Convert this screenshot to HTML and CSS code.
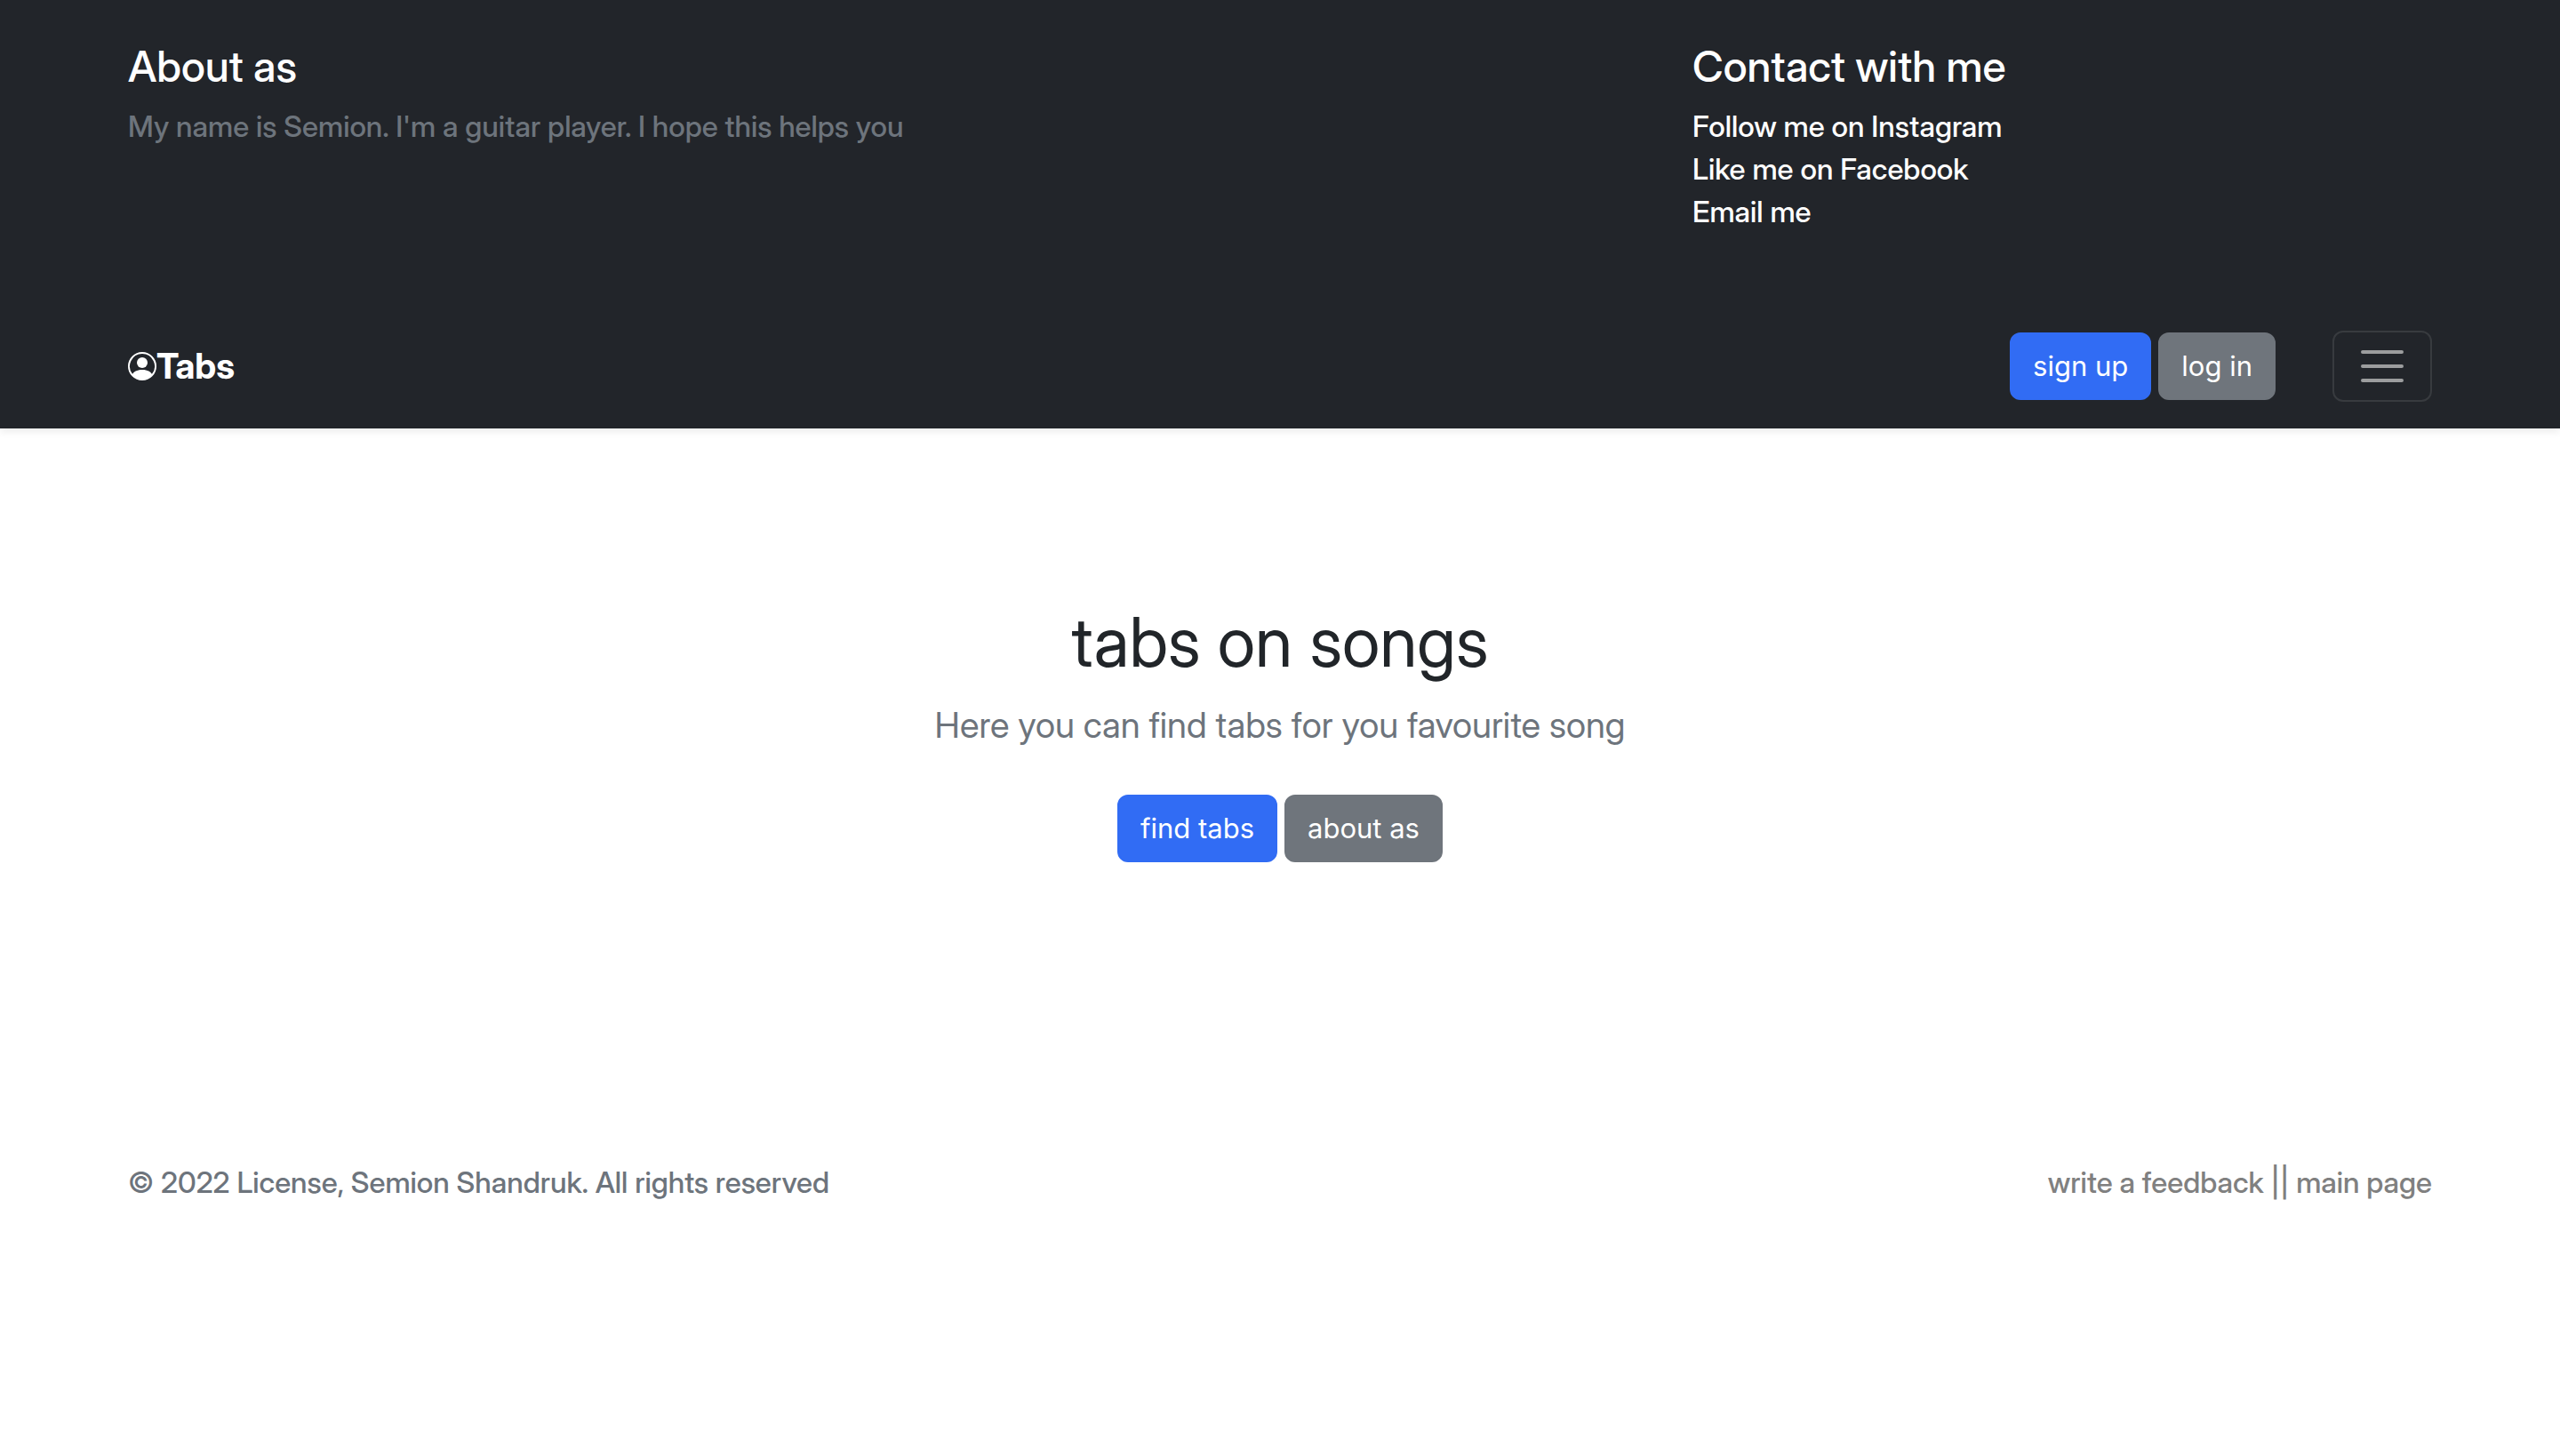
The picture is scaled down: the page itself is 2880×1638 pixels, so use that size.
FILE: index.html
```html
<!DOCTYPE html>
<html lang="en">
<head>
<meta charset="utf-8">
<meta name="viewport" content="width=device-width, initial-scale=1">
<title>Tabs</title>
<link rel="stylesheet" href="styles.css">
</head>
<body>
<header class="site-header">
  <div class="container intro">
    <section class="about">
      <h4 class="heading">About as</h4>
      <p class="muted">My name is Semion. I'm a guitar player. I hope this helps you</p>
    </section>
    <section class="contact">
      <h4 class="heading">Contact with me</h4>
      <ul class="contact-list">
        <li><a href="#">Follow me on Instagram</a></li>
        <li><a href="#">Like me on Facebook</a></li>
        <li><a href="#">Email me</a></li>
      </ul>
    </section>
  </div>
  <nav class="container navbar">
    <a class="brand" href="#">
      <svg class="brand-icon" viewBox="0 0 16 16" fill="currentColor" aria-hidden="true">
        <path d="M11 6a3 3 0 1 1-6 0 3 3 0 0 1 6 0z"/>
        <path fill-rule="evenodd" d="M0 8a8 8 0 1 1 16 0A8 8 0 0 1 0 8zm8-7a7 7 0 0 0-5.468 11.37C3.242 11.226 4.805 10 8 10s4.757 1.225 5.468 2.37A7 7 0 0 0 8 1z"/>
      </svg>
      <strong>Tabs</strong>
    </a>
    <div class="actions">
      <button class="btn btn-primary" type="button">sign up</button>
      <button class="btn btn-secondary" type="button">log in</button>
    </div>
    <button class="toggler" type="button" aria-label="Toggle navigation">
      <svg class="toggler-icon" viewBox="0 0 30 30" fill="none" stroke="currentColor" stroke-width="2" stroke-linecap="round" aria-hidden="true">
        <path d="M4 7h22M4 15h22M4 23h22"/>
      </svg>
    </button>
  </nav>
</header>
<main class="hero">
  <h1 class="title">tabs on songs</h1>
  <p class="lead">Here you can find tabs for you favourite song</p>
  <div class="hero-actions">
    <button class="btn btn-primary" type="button">find tabs</button>
    <button class="btn btn-secondary" type="button">about as</button>
  </div>
</main>
<footer class="container site-footer">
  <p>© 2022 License, Semion Shandruk. All rights reserved</p>
  <p class="footer-links"><a href="#">write a feedback</a> || <a href="#">main page</a></p>
</footer>
</body>
</html>
```
FILE: styles.css
```css
* {
  box-sizing: border-box;
}

body {
  margin: 0;
  background: #fff;
  color: #212529;
  font-family: "Inter Display", Inter, "Liberation Sans", sans-serif;
  font-size: 33px;
  font-weight: 500;
  line-height: 48px;
}

h1, h4, p, ul {
  margin: 0;
}

a {
  color: inherit;
  text-decoration: none;
}

.container {
  width: 100%;
  max-width: 2640px;
  margin: 0 auto;
  padding: 0 24px;
}

.site-header {
  background: #22252a;
  color: #fff;
  box-shadow: 0 4px 8px rgba(0, 0, 0, 0.075);
}

.intro {
  display: grid;
  grid-template-columns: 1760fr 832fr;
  padding-top: 46px;
  padding-bottom: 82px;
}

.heading {
  margin-bottom: 14px;
  font-size: 48px;
  font-weight: 500;
  line-height: 58px;
}

.muted {
  color: #6d747c;
}

.contact-list {
  padding: 0;
  list-style: none;
}

.navbar {
  display: flex;
  align-items: center;
  padding-top: 28px;
  padding-bottom: 30px;
}

.brand {
  display: flex;
  align-items: center;
  margin-right: auto;
  font-size: 40px;
}

.brand strong {
  font-weight: 700;
}

.brand-icon {
  width: 32px;
  height: 32px;
}

.actions,
.hero-actions {
  display: flex;
  gap: 8px;
}

.actions {
  margin-right: 64px;
}

.btn {
  padding: 12px 24px;
  border: 2px solid transparent;
  border-radius: 12px;
  color: #fff;
  font-family: Inter, "Liberation Sans", sans-serif;
  font-size: 31px;
  font-weight: 400;
  line-height: 48px;
}

.btn-primary {
  border-color: #316cf4;
  background: #316cf4;
}

.btn-secondary {
  border-color: #6f757c;
  background: #6f757c;
}

.toggler {
  display: flex;
  padding: 8px 24px;
  border: 2px solid #383b3f;
  border-radius: 12px;
  background: transparent;
  color: #9c9d9e;
}

.toggler-icon {
  width: 60px;
  height: 60px;
}

.hero {
  display: flex;
  flex-direction: column;
  align-items: center;
  padding: 192px 24px;
  text-align: center;
}

.title {
  margin-bottom: 16px;
  font-size: 77px;
  font-weight: 400;
  line-height: 96px;
}

.lead {
  margin-bottom: 48px;
  color: #6d747c;
  font-size: 40px;
  font-weight: 400;
  line-height: 60px;
}

.site-footer {
  display: flex;
  justify-content: space-between;
  padding-top: 144px;
  padding-bottom: 144px;
  color: #6d747c;
}

.footer-links {
  color: #808080;
}
```
